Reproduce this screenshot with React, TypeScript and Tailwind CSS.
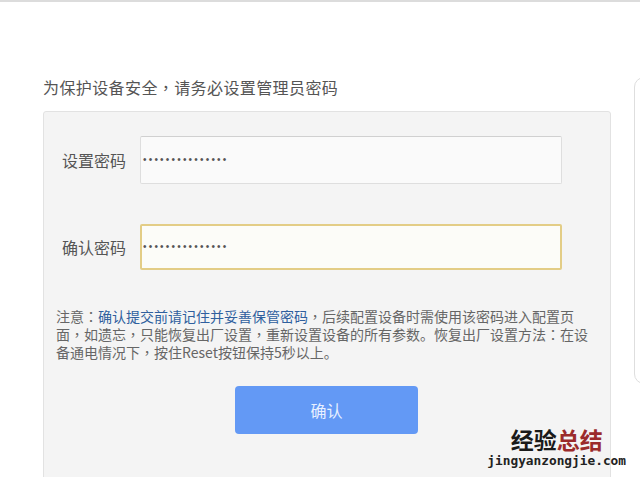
import React from "react";

const Dots = () => (
  <span className="text-[#555] text-[10px] tracking-[2.2px] leading-none" style={{ fontFamily: '"Liberation Sans", sans-serif' }}>
    {"•".repeat(15)}
  </span>
);

const T = ({ s }: { s: string }) => (
  <>
    {s.split(/([，：])/).map((p, i) =>
      p === "，" || p === "：" ? (
        <span key={i} className="inline-block font-['Noto_Sans_CJK_TC']">
          {p}
        </span>
      ) : (
        <React.Fragment key={i}>{p}</React.Fragment>
      )
    )}
  </>
);

export default function App() {
  return (
    <div
      className="relative w-[640px] h-[477px] overflow-hidden bg-white border-t-2 border-[#dcdcdc]"
      style={{ fontFamily: '"Noto Sans CJK SC", "Noto Sans", sans-serif' }}
    >
      <div className="pt-[75px] pl-[43px] w-[611px]">
        <p className="text-[16px] leading-[21px] tracking-[0.4px] text-[#555]">
          <T s="为保护设备安全，请务必设置管理员密码" />
        </p>
        <div className="mt-[13px] h-[400px] bg-[#f4f4f4] border border-[#e2e2e2] rounded-[3px] pt-[24px] pl-[12px]">
          <div className="flex items-center pl-[6px]">
            <span className="w-[78px] text-[16px] text-[#555]">设置密码</span>
            <div className="w-[422px] h-[48px] bg-[#fafafa] border border-[#dedede] border-t-[#d0d0d0] rounded-[2px] flex items-center pl-[2px]">
              <Dots />
            </div>
          </div>
          <div className="flex items-center pl-[6px] mt-[40px]">
            <span className="w-[78px] text-[16px] text-[#555]">确认密码</span>
            <div className="w-[422px] h-[46px] bg-[#fcfcf8] border-2 border-[#e3cd86] rounded-[2px] flex items-center pl-[1px]">
              <Dots />
            </div>
          </div>
          <div className="mt-[37px] text-[14px] leading-[18px] tracking-[0px] text-[#666] whitespace-nowrap">
            <p className="h-[18px]">
              <T s="注意：" />
              <span className="inline-block text-[#2f5f9e]">确认提交前请记住并妥善保管密码</span>
              <T s="，后续配置设备时需使用该密码进入配置页" />
            </p>
            <p className="h-[18px]">
              <T s="面，如遗忘，只能恢复出厂设置，重新设置设备的所有参数。恢复出厂设置方法：在设" />
            </p>
            <p className="h-[18px]">
              <T s="备通电情况下，按住Reset按钮保持5秒以上。" />
            </p>
          </div>
          <button className="mt-[25px] ml-[179px] w-[183px] h-[48px] rounded-[4px] bg-[#6399f5] text-[#e8f0ff] text-[16px]">
            确认
          </button>
        </div>
      </div>
      <div className="absolute left-[634px] top-[75px] w-[30px] h-[307px] rounded-[10px] border border-[#dedede]" />
      <div className="absolute right-[14px] top-[423px] flex flex-col items-center">
        <div className="text-[23px] leading-[28px] font-bold">
          <span className="text-[#1a1a1a]">经验</span>
          <span className="text-[#9b2b2b]">总结</span>
        </div>
        <div className="text-[12.8px] leading-[16px] text-[#222] font-bold" style={{ fontFamily: '"DejaVu Sans Mono", monospace' }}>
          jingyanzongjie.com
        </div>
      </div>
    </div>
  );
}
